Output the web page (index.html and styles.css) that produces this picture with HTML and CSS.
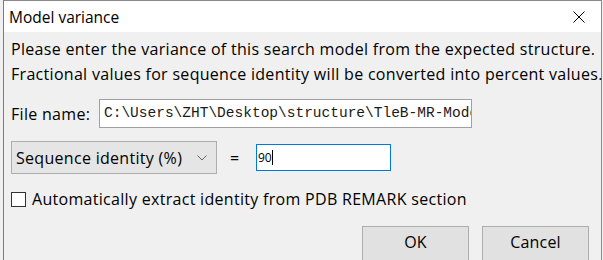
FILE: index.html
```html
<!DOCTYPE html>
<html lang="en">

<head>
    <meta charset="UTF-8">
    <title>Model variance</title>
    <link rel="stylesheet" href="styles.css">
</head>

<body>
    <div class="window">
        <div class="titlebar">
            <span class="title">Model variance</span>
            <svg class="close" width="12" height="12" viewBox="0 0 12 12">
                <path d="M0.5 0.5 L11.5 11.5 M11.5 0.5 L0.5 11.5" stroke="#000" stroke-width="1" fill="none" />
            </svg>
        </div>
        <div class="content">
            <p class="intro">
                Please enter the variance of this search model from the expected structure.<br>
                Fractional values for sequence identity will be converted into percent values.
            </p>

            <div class="row file-row">
                <label class="label">File name:</label>
                <div class="path-box">C:\Users\ZHT\Desktop\structure\TleB-MR-Model.pdb</div>
            </div>

            <div class="row value-row">
                <div class="combo">
                    <span>Sequence identity (%)</span>
                    <svg width="10" height="6" viewBox="0 0 10 6">
                        <path d="M0.5 0.5 L5 5 L9.5 0.5" stroke="#666" stroke-width="1" fill="none" />
                    </svg>
                </div>
                <span class="equals">=</span>
                <div class="value-box">90<span class="caret"></span></div>
            </div>

            <div class="row check-row">
                <span class="checkbox"></span>
                <span>Automatically extract identity from PDB REMARK section</span>
            </div>

            <div class="buttons">
                <button class="btn">OK</button>
                <button class="btn">Cancel</button>
            </div>
        </div>
    </div>
</body>

</html>
```

FILE: styles.css
```css
body {
    margin: 0;
    background: #f0f0f0;
    font-family: "Open Sans", "Noto Sans", Arial, sans-serif;
    font-size: 16px;
    letter-spacing: 0.3px;
    color: #000;
    overflow: hidden;
}

.window {
    margin-left: 3px;
    width: 597px;
    height: 259px;
    border-top: 1px solid #8a8a8a;
    border-left: 1px solid #7a7a7a;
    border-right: 1px solid #8a8a8a;
}

.titlebar {
    height: 31px;
    background: #fff;
    display: flex;
    align-items: center;
    justify-content: space-between;
    padding: 0 16px 0 5px;
}

.title {
    font-size: 15.5px;
    letter-spacing: 0;
}

.close {
    margin-top: 1px;
}

.content {
    background: #f0f0f0;
    padding: 5px 0 0 7px;
    height: 230px;
}

.intro {
    margin: 0;
    line-height: 25px;
    white-space: nowrap;
}

.row {
    display: flex;
    align-items: center;
}

.file-row {
    margin-top: 12px;
}

.label {
    width: 88px;
}

.path-box {
    width: 367px;
    height: 27px;
    border: 1px solid #a0a0a0;
    background: #fff;
    font-family: "Liberation Mono", monospace;
    font-size: 14.5px;
    letter-spacing: 0;
    line-height: 27px;
    color: #1a1a1a;
    padding-left: 4px;
    white-space: nowrap;
    overflow: hidden;
}

.value-row {
    margin-top: 13px;
}

.combo {
    width: 191px;
    height: 31px;
    border: 1px solid #adadad;
    background: #e5e5e5;
    display: flex;
    align-items: center;
    justify-content: space-between;
    padding: 0 9px 0 4px;
}

.equals {
    margin-left: 13px;
    width: 26px;
}

.value-box {
    width: 132px;
    height: 25px;
    border: 1px solid #0078d7;
    background: #fff;
    display: flex;
    align-items: center;
    padding-left: 1px;
    font-size: 12px;
    letter-spacing: 0;
}

.caret {
    display: inline-block;
    width: 1px;
    height: 15px;
    background: #000;
}

.check-row {
    margin-top: 14px;
    gap: 6px;
    white-space: nowrap;
}

.checkbox {
    width: 13px;
    height: 13px;
    border: 1px solid #333;
    background: #fff;
}

.buttons {
    display: flex;
    justify-content: flex-end;
    gap: 13px;
    margin-top: 16px;
    padding-right: 12px;
}

.btn {
    width: 107px;
    height: 36px;
    border: 1px solid #adadad;
    background: #e1e1e1;
    font-family: inherit;
    font-size: 16px;
    letter-spacing: 0.2px;
    padding: 0 0 4px;
}
```
